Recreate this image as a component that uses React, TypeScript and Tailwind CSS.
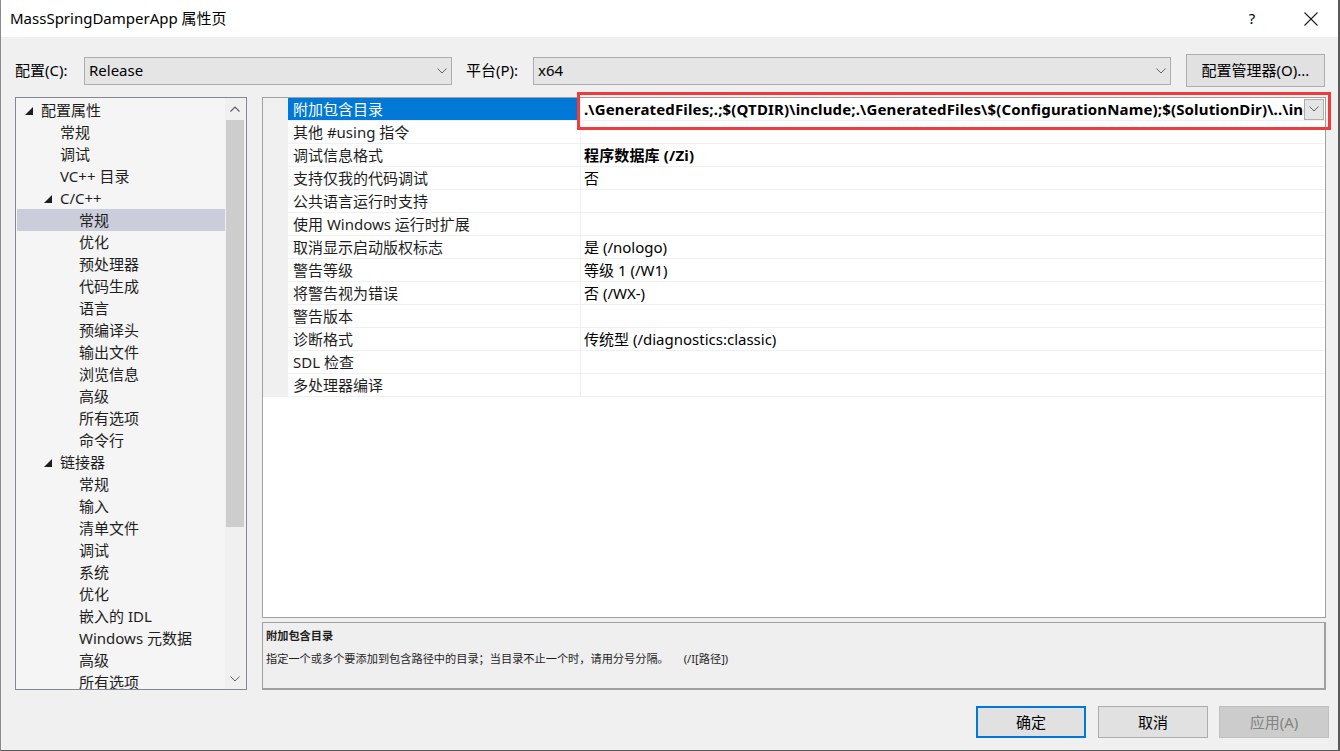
import React from "react";

type TreeItem = { label: string; level: number; caret?: boolean; selected?: boolean };

const treeItems: TreeItem[] = [
  { label: "配置属性", level: 0, caret: true },
  { label: "常规", level: 1 },
  { label: "调试", level: 1 },
  { label: "VC++ 目录", level: 1 },
  { label: "C/C++", level: 1, caret: true },
  { label: "常规", level: 2, selected: true },
  { label: "优化", level: 2 },
  { label: "预处理器", level: 2 },
  { label: "代码生成", level: 2 },
  { label: "语言", level: 2 },
  { label: "预编译头", level: 2 },
  { label: "输出文件", level: 2 },
  { label: "浏览信息", level: 2 },
  { label: "高级", level: 2 },
  { label: "所有选项", level: 2 },
  { label: "命令行", level: 2 },
  { label: "链接器", level: 1, caret: true },
  { label: "常规", level: 2 },
  { label: "输入", level: 2 },
  { label: "清单文件", level: 2 },
  { label: "调试", level: 2 },
  { label: "系统", level: 2 },
  { label: "优化", level: 2 },
  { label: "嵌入的 IDL", level: 2 },
  { label: "Windows 元数据", level: 2 },
  { label: "高级", level: 2 },
  { label: "所有选项", level: 2 },
];

type Prop = { name: string; value: string; bold?: boolean };

const props: Prop[] = [
  {
    name: "附加包含目录",
    value:
      ".\\GeneratedFiles;.;$(QTDIR)\\include;.\\GeneratedFiles\\$(ConfigurationName);$(SolutionDir)\\..\\include;$(SolutionDir)\\..\\third_party",
    bold: true,
  },
  { name: "其他 #using 指令", value: "" },
  { name: "调试信息格式", value: "程序数据库 (/Zi)", bold: true },
  { name: "支持仅我的代码调试", value: "否" },
  { name: "公共语言运行时支持", value: "" },
  { name: "使用 Windows 运行时扩展", value: "" },
  { name: "取消显示启动版权标志", value: "是 (/nologo)" },
  { name: "警告等级", value: "等级 1 (/W1)" },
  { name: "将警告视为错误", value: "否 (/WX-)" },
  { name: "警告版本", value: "" },
  { name: "诊断格式", value: "传统型 (/diagnostics:classic)" },
  { name: "SDL 检查", value: "" },
  { name: "多处理器编译", value: "" },
];

function ChevronDown({ className = "" }: { className?: string }) {
  return (
    <svg width="10" height="6" viewBox="0 0 10 6" className={className}>
      <polyline points="0.5,0.5 5,5 9.5,0.5" fill="none" stroke="#606060" strokeWidth="1" />
    </svg>
  );
}

function ChevronUp({ className = "" }: { className?: string }) {
  return (
    <svg width="10" height="6" viewBox="0 0 10 6" className={className}>
      <polyline points="0.5,5.5 5,1 9.5,5.5" fill="none" stroke="#606060" strokeWidth="1.2" />
    </svg>
  );
}

function Caret() {
  return (
    <svg width="8" height="8" viewBox="0 0 8 8" className="absolute top-[8px]">
      <polygon points="8,0 8,8 0,8" fill="#1e1e1e" />
    </svg>
  );
}

function Tree() {
  return (
    <div className="w-[232px] h-full border border-[#828790] bg-[#f5f5f5] flex shrink-0">
      <div className="flex-1 min-w-0 pt-[1px] pl-[1px] overflow-hidden">
        {treeItems.map((it, i) => (
          <div
            key={i}
            className={
              "relative h-[22px] leading-[22px] whitespace-nowrap text-[#1e1e1e] " +
              (it.selected ? "bg-[#cbcdda]" : "")
            }
            style={{ paddingLeft: 24 + 19 * it.level }}
          >
            {it.caret && (
              <span className="absolute top-0" style={{ left: 8 + 19 * it.level }}>
                <Caret />
              </span>
            )}
            {it.label}
          </div>
        ))}
      </div>
      <div className="w-[20px] mr-[1px] flex flex-col bg-[#f0f0f0] shrink-0">
        <div className="h-[21px] flex items-center justify-center">
          <ChevronUp />
        </div>
        <div className="mx-[1px] mt-[1px] h-[407px] bg-[#cdcdcd]" />
        <div className="flex-1" />
        <div className="h-[20px] flex items-center justify-center">
          <ChevronDown />
        </div>
      </div>
    </div>
  );
}

function PropertyGrid() {
  return (
    <div className="relative h-[522px] border border-[#a0a0a0] bg-white flex flex-col">
      {props.map((p, i) => (
        <div key={i} className="h-[23px] flex shrink-0">
          <div className="w-[25px] shrink-0 bg-[#f0f0f0]" />
          <div className="flex-1 min-w-0 flex border-b border-[#eef0f4]">
            <div
              className={
                "w-[293px] shrink-0 pl-[5px] leading-[22px] whitespace-nowrap border-r border-[#eef0f4] " +
                (i === 0 ? "bg-[#0078d7] text-white" : "text-[#1e1e1e]")
              }
            >
              {p.name}
            </div>
            <div className="flex-1 flex items-center min-w-0 pl-[3px]">
              <div
                className={
                  "flex-1 min-w-0 overflow-hidden whitespace-nowrap leading-[22px] text-black " +
                  (p.bold ? "font-bold tracking-[0.15px]" : "")
                }
              >
                {p.value}
              </div>
              {i === 0 && (
                <div className="w-[20px] h-[21px] mr-[1px] shrink-0 bg-[#e5e5e5] border border-[#adadad] flex items-center justify-center">
                  <ChevronDown />
                </div>
              )}
            </div>
          </div>
        </div>
      ))}
      {/* red highlight frame around the include-path value */}
      <div className="absolute left-[314px] top-[-6px] w-[754px] h-[38px] border-[3px] border-[#ee3b3b] pointer-events-none" />
    </div>
  );
}

function Description() {
  return (
    <div className="h-[68px] border border-[#a0a0a0] border-b-2 border-r-2 bg-[#efefef] pl-[3px] pt-[4px] text-[11.2px] text-[#1e1e1e]">
      <div className="h-[18px] leading-[18px] font-bold">附加包含目录</div>
      <div className="h-[18px] leading-[18px] mt-[5px] whitespace-nowrap">
        指定一个或多个要添加到包含路径中的目录；当目录不止一个时，请用分号分隔。
        <span className="ml-[15px]">(/I[路径])</span>
      </div>
    </div>
  );
}

function Select({ value, width }: { value: string; width: string }) {
  return (
    <div className={width + " h-[28px] shrink-0 bg-[#e5e5e5] border border-[#adadad] flex items-center pl-[4px] pr-[4px]"}>
      <span className="flex-1 text-black">{value}</span>
      <ChevronDown />
    </div>
  );
}

export default function App() {
  return (
    <div className="relative w-[1340px] h-[751px] bg-[#f0f0f0] flex flex-col overflow-hidden text-[15px] font-['Noto_Sans','Noto_Sans_CJK_SC',sans-serif] text-[#1e1e1e]">
      {/* title bar */}
      <div className="h-[37px] bg-white flex items-center pl-[10px] pr-[22px] shrink-0">
        <div className="flex-1 text-black">MassSpringDamperApp 属性页</div>
        <div className="w-[16px] text-center text-black mr-[44px]">?</div>
        <svg width="14" height="14" viewBox="0 0 14 14">
          <line x1="0.5" y1="0.5" x2="13.5" y2="13.5" stroke="#1e1e1e" strokeWidth="1.1" />
          <line x1="13.5" y1="0.5" x2="0.5" y2="13.5" stroke="#1e1e1e" strokeWidth="1.1" />
        </svg>
      </div>

      {/* configuration / platform row */}
      <div className="h-[33px] mt-[17px] flex items-center pl-[15px] shrink-0">
        <div className="w-[69px] shrink-0 text-black">配置(C):</div>
        <Select value="Release" width="w-[368px]" />
        <div className="w-[67px] ml-[14px] shrink-0 text-black">平台(P):</div>
        <Select value="x64" width="w-[638px]" />
        <div className="ml-[15px] w-[139px] h-[33px] shrink-0 bg-[#e1e1e1] border border-[#adadad] flex items-center justify-center text-black">
          配置管理器(O)...
        </div>
      </div>

      {/* main area */}
      <div className="h-[593px] mt-[10px] flex pl-[15px] gap-[15px] shrink-0">
        <Tree />
        <div className="w-[1064px] shrink-0 flex flex-col gap-[4px]">
          <PropertyGrid />
          <Description />
        </div>
      </div>

      {/* dialog buttons */}
      <div className="h-[32px] mt-[16px] flex justify-end pr-[11px] shrink-0">
        <div className="w-[110px] h-[32px] border-2 border-[#0078d7] bg-[#e1e1e1] flex items-center justify-center text-black">
          确定
        </div>
        <div className="w-[110px] h-[32px] ml-[12px] border border-[#adadad] bg-[#e1e1e1] flex items-center justify-center text-black">
          取消
        </div>
        <div className="w-[110px] h-[32px] ml-[11px] border border-[#bfbfbf] bg-[#cccccc] flex items-center justify-center text-[#838383]">
          应用(A)
        </div>
      </div>

      {/* window frame */}
      <div className="absolute inset-0 border-l border-l-[#8a8a8a] border-r-2 border-r-[#5a5a5a] border-b border-b-[#5a5a5a] pointer-events-none" />
    </div>
  );
}
